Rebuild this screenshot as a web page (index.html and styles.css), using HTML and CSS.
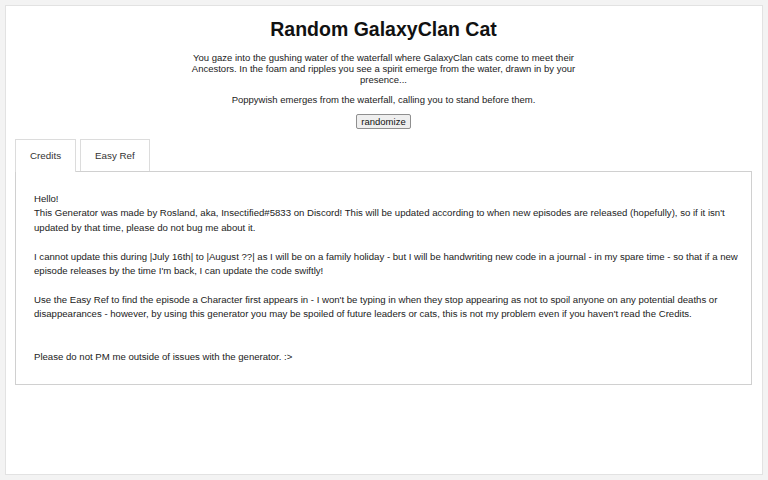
FILE: index.html
```html
<!DOCTYPE html>
<html>
<head>
<meta charset="utf-8">
<link rel="stylesheet" href="styles.css">
</head>
<body>
<div class="page">
  <h1 class="title">Random GalaxyClan Cat</h1>
  <p class="intro">You gaze into the gushing water of the waterfall where GalaxyClan cats come to meet their Ancestors. In the foam and ripples you see a spirit emerge from the water, drawn in by your presence...</p>
  <p class="result">Poppywish emerges from the waterfall, calling you to stand before them.</p>
  <div class="actions"><button class="btn">randomize</button></div>
  <div class="tabs">
    <div class="tab active">Credits</div>
    <div class="tab">Easy Ref</div>
  </div>
  <div class="panel">
    <p>Hello!<br>This Generator was made by Rosland, aka, Insectified#5833 on Discord! This will be updated according to when new episodes are released (hopefully), so if it isn't updated by that time, please do not bug me about it.</p>
    <p>I cannot update this during |July 16th| to |August ??| as I will be on a family holiday - but I will be handwriting new code in a journal - in my spare time - so that if a new episode releases by the time I'm back, I can update the code swiftly!</p>
    <p>Use the Easy Ref to find the episode a Character first appears in - I won't be typing in when they stop appearing as not to spoil anyone on any potential deaths or disappearances - however, by using this generator you may be spoiled of future leaders or cats, this is not my problem even if you haven't read the Credits.</p>
    <p class="last">Please do not PM me outside of issues with the generator. :&gt;</p>
  </div>
</div>
</body>
</html>
```
FILE: styles.css
```css
html, body {
  margin: 0;
  padding: 0;
}
body {
  background: #f3f3f3;
  padding: 5px;
  font-family: "Liberation Sans", Arial, sans-serif;
  color: #222;
}
.page {
  background: #fff;
  border: 1px solid #e2e2e2;
  box-sizing: border-box;
  height: 470px;
  padding: 10px 10px 0 9px;
}
.title {
  margin: 0;
  text-align: center;
  font-size: 19.5px;
  line-height: 26px;
  font-weight: bold;
  color: #111;
}
.intro {
  width: 400px;
  margin: 10px auto 0;
  text-align: center;
  font-size: 9.5px;
  line-height: 11px;
}
.result {
  margin: 9px 0 0;
  text-align: center;
  font-size: 9.5px;
  line-height: 11px;
}
.actions {
  text-align: center;
  margin-top: 9px;
  line-height: 0;
}
.btn {
  font-family: "Liberation Sans", Arial, sans-serif;
  font-size: 9.5px;
  line-height: 11px;
  padding: 1px 4px;
  border: 1px solid #8f8f8f;
  border-radius: 2px;
  background: #efefef;
  color: #111;
}
.tabs {
  display: flex;
  gap: 4px;
  margin-top: 10px;
  position: relative;
  z-index: 1;
}
.tab {
  border: 1px solid #dcdcdc;
  border-bottom: none;
  padding: 0 14px;
  height: 31px;
  line-height: 31px;
  font-size: 9.8px;
  color: #333;
  background: #fff;
}
.tab.active {
  height: 32px;
  margin-bottom: -1px;
}
.panel {
  border: 1px solid #d0d0d0;
  padding: 20px 12px 19px 18px;
  font-size: 9.6px;
  line-height: 14.4px;
  color: #222;
}
.panel p {
  margin: 0 0 14.4px;
}
.panel p.last {
  margin-top: 28.8px;
  margin-bottom: 0;
}
```
